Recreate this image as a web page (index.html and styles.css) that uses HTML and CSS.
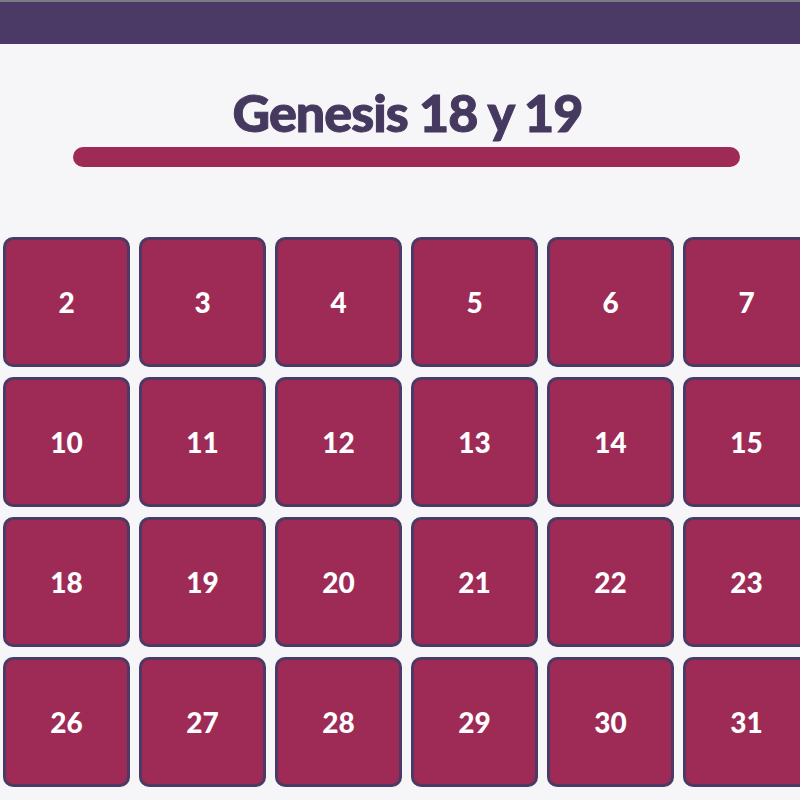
FILE: index.html
```html
<!DOCTYPE html>
<html>
<head>
<meta charset="utf-8">
<link rel="stylesheet" href="styles.css">
</head>
<body>
<div class="topbar"></div>
<header class="head">
  <h1 class="title">Genesis 18 y 19</h1>
  <div class="rule"></div>
</header>
<main class="grid">
  <div class="tile">2</div><div class="tile">3</div><div class="tile">4</div><div class="tile">5</div><div class="tile">6</div><div class="tile">7</div>
  <div class="tile">10</div><div class="tile">11</div><div class="tile">12</div><div class="tile">13</div><div class="tile">14</div><div class="tile">15</div>
  <div class="tile">18</div><div class="tile">19</div><div class="tile">20</div><div class="tile">21</div><div class="tile">22</div><div class="tile">23</div>
  <div class="tile">26</div><div class="tile">27</div><div class="tile">28</div><div class="tile">29</div><div class="tile">30</div><div class="tile">31</div>
</main>
</body>
</html>
```
FILE: styles.css
```css
html, body {
  margin: 0;
  padding: 0;
  width: 800px;
  height: 800px;
  overflow: hidden;
  background: #f6f5f7;
  font-family: "Lato", "Open Sans", sans-serif;
}
.topbar {
  height: 42px;
  background: #4a3a65;
  border-top: 2px solid #7a7a80;
}
.head {
  display: flex;
  flex-direction: column;
  align-items: center;
  padding-top: 40px;
}
.title {
  margin: 0 0 0 15px;
  font-size: 52px;
  line-height: 56px;
  font-weight: 900;
  color: #45395f;
  letter-spacing: -1px;
  -webkit-text-stroke: 1px #45395f;
}
.rule {
  margin: 7px 0 0 13px;
  width: 667px;
  height: 20px;
  border-radius: 10px;
  background: #9e2a56;
}
.grid {
  display: grid;
  grid-template-columns: repeat(6, 127px);
  grid-auto-rows: 130px;
  column-gap: 9px;
  row-gap: 10px;
  padding: 70px 0 0 3px;
}
.tile {
  box-sizing: border-box;
  background: #9e2a56;
  border: 3px solid #4a3a65;
  border-radius: 10px;
  display: flex;
  align-items: center;
  justify-content: center;
  color: #ffffff;
  font-size: 28px;
  font-weight: 900;
}
```
